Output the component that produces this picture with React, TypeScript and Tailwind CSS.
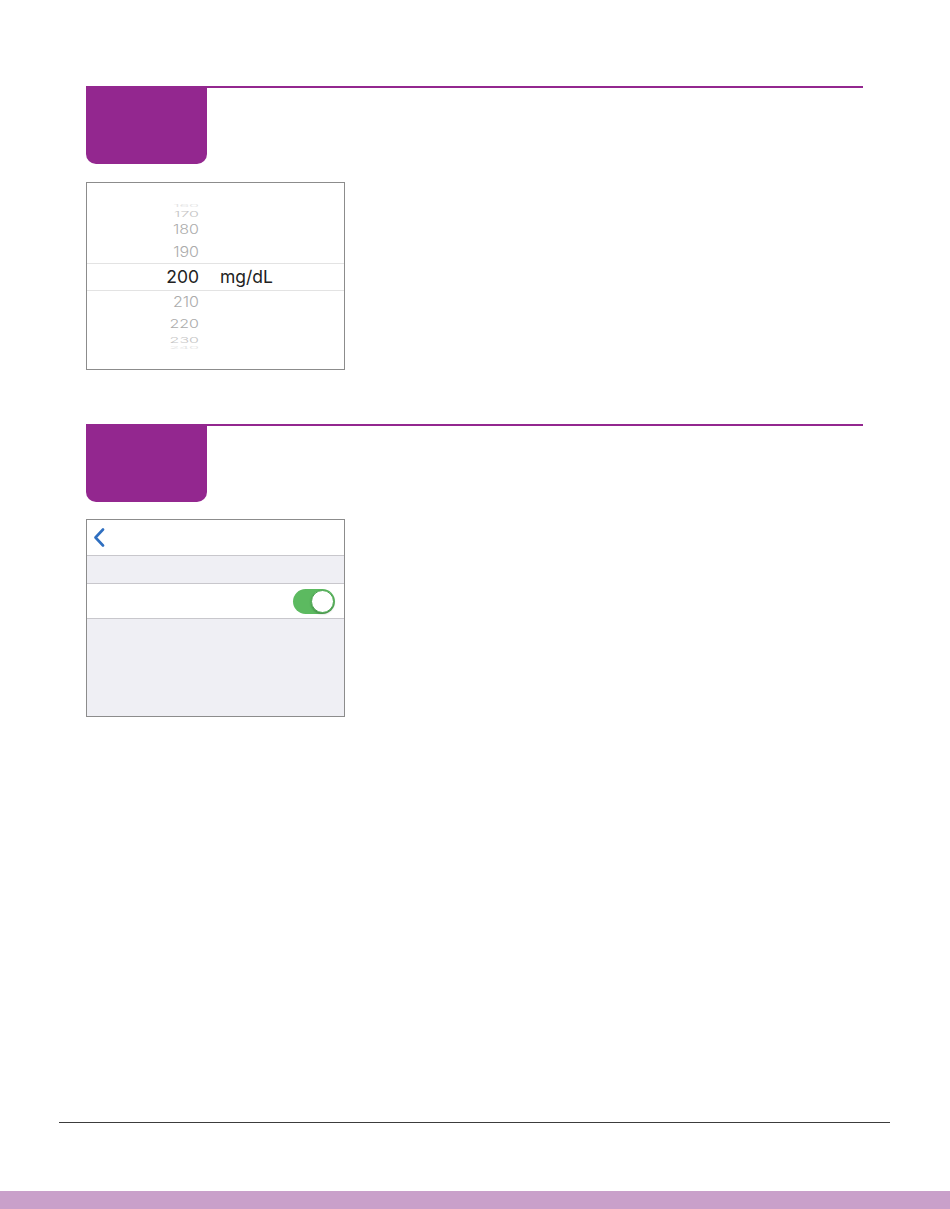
import React from "react";

type WheelItem = { v: string; h: number; sy: number; color: string };

// fake wheel: rows shrink vertically as they roll away from the selected value
const above: WheelItem[] = [
  { v: "160", h: 6, sy: 0.22, color: "#e2e2e2" },
  { v: "170", h: 9, sy: 0.5, color: "#c4c4c4" },
  { v: "180", h: 22, sy: 0.78, color: "#ababab" },
  { v: "190", h: 23, sy: 0.88, color: "#ababab" },
];
const below: WheelItem[] = [
  { v: "210", h: 22, sy: 0.88, color: "#ababab" },
  { v: "220", h: 21, sy: 0.72, color: "#ababab" },
  { v: "230", h: 11, sy: 0.5, color: "#c4c4c4" },
  { v: "240", h: 6, sy: 0.22, color: "#e2e2e2" },
];

function WheelRow({ item }: { item: WheelItem }) {
  return (
    <div className="flex items-center overflow-visible" style={{ height: item.h }}>
      <div
        className="w-[112px] text-right text-[16px] font-light leading-none"
        style={{ color: item.color, transform: `scaleY(${item.sy})` }}
      >
        {item.v}
      </div>
    </div>
  );
}

function SectionHead() {
  return (
    <div className="border-t-2 border-[#93278f]">
      <div className="-mt-[2px] h-[78px] w-[121px] rounded-b-[10px] bg-[#93278f]" />
    </div>
  );
}

function Picker() {
  return (
    <div className="h-[188px] w-[259px] overflow-hidden border border-[#8c8c8c] bg-white pt-[20px]">
      {above.map((it) => (
        <WheelRow key={it.v} item={it} />
      ))}
      <div className="flex h-[28px] items-center border-y border-[#e3e3e3] text-[17.5px] text-[#222]">
        <div className="w-[112px] text-right leading-none">200</div>
        <div className="ml-[21px] leading-none">mg/dL</div>
      </div>
      {below.map((it) => (
        <WheelRow key={it.v} item={it} />
      ))}
    </div>
  );
}

function Settings() {
  return (
    <div className="flex h-[198px] w-[259px] flex-col overflow-hidden border border-[#8c8c8c] bg-[#efeff4]">
      <div className="flex h-[36px] items-center border-b border-[#c8c7cc] bg-white pl-[6px]">
        <svg width="12" height="19" viewBox="0 0 12 19" fill="none">
          <path d="M10 1.5 L2.5 9.5 L10 17.5" stroke="#2f6fc0" strokeWidth="2.6" strokeLinecap="round" strokeLinejoin="round" />
        </svg>
      </div>
      <div className="h-[28px] border-b border-[#c8c7cc]" />
      <div className="flex h-[35px] items-center justify-end border-b border-[#c8c7cc] bg-white pr-[9px]">
        <div className="flex h-[25px] w-[42px] items-center justify-end rounded-full bg-[#5cba60] p-[1px]">
          <div className="h-[23px] w-[23px] rounded-full border border-[#4aa84f] bg-white shadow-[0_1px_2px_rgba(0,0,0,0.25)]" />
        </div>
      </div>
    </div>
  );
}

export default function App() {
  return (
    <div className="flex h-[1209px] w-[950px] flex-col bg-white" style={{ fontFamily: "Inter, 'Liberation Sans', sans-serif" }}>
      <main className="flex flex-col pl-[86px] pr-[87px] pt-[86px]">
        <SectionHead />
        <div className="mt-[18px]">
          <Picker />
        </div>
        <div className="mt-[54px]">
          <SectionHead />
        </div>
        <div className="mt-[17px]">
          <Settings />
        </div>
      </main>
      <div className="flex-1" />
      <div className="mx-[59px] mb-[68px] h-px bg-[#3c3c3c] w-[831px]" />
      <div className="h-[18px] bg-[#c9a0ca]" />
    </div>
  );
}
